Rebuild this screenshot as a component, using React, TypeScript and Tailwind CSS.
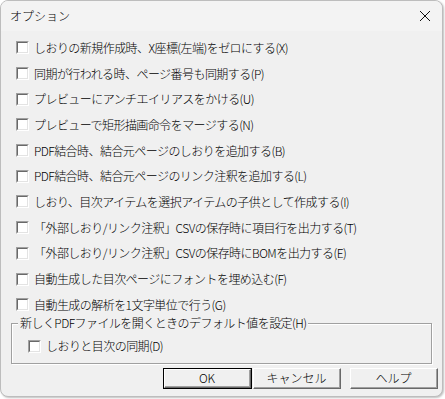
import React, { FC } from "react";

const options: string[] = [
  "しおりの新規作成時、X座標(左端)をゼロにする(X)",
  "同期が行われる時、ページ番号も同期する(P)",
  "プレビューにアンチエイリアスをかける(U)",
  "プレビューで矩形描画命令をマージする(N)",
  "PDF結合時、結合元ページのしおりを追加する(B)",
  "PDF結合時、結合元ページのリンク注釈を追加する(L)",
  "しおり、目次アイテムを選択アイテムの子供として作成する(I)",
  "「外部しおり/リンク注釈」CSVの保存時に項目行を出力する(T)",
  "「外部しおり/リンク注釈」CSVの保存時にBOMを出力する(E)",
  "自動生成した目次ページにフォントを埋め込む(F)",
  "自動生成の解析を1文字単位で行う(G)",
];

// classic sunken 13px checkbox
const Check: FC = () => (
  <span className="block w-[13px] h-[13px] shrink-0 border border-t-[#a0a0a0] border-l-[#a0a0a0] border-b-white border-r-white">
    <span className="block w-full h-full bg-white border border-t-[#696969] border-l-[#696969] border-b-[#e3e3e3] border-r-[#e3e3e3]" />
  </span>
);

const Button: FC<{ label: string; isDefault?: boolean; className?: string }> = ({
  label,
  isDefault,
  className = "",
}) => (
  <div
    className={`h-[21px] ${isDefault ? "border border-black" : ""} ${className}`}
  >
    <div className="h-full border border-t-white border-l-white border-b-[#696969] border-r-[#696969] bg-[#f0f0f0]">
      <div className="h-full flex items-center justify-center border-b border-r border-[#a0a0a0]">
        {label}
      </div>
    </div>
  </div>
);

const App: FC = () => {
  return (
    <div className="w-[445px] h-[399px] bg-white font-['Noto_Sans_CJK_JP',sans-serif] font-light text-[12px] text-black leading-none">
      <div className="w-[443px] h-[397px] rounded-lg border border-[#bdbdbd] bg-[#f0f0f0] overflow-hidden flex flex-col shadow-[1px_1px_2px_rgba(0,0,0,0.25)]">
        {/* title bar */}
        <div className="h-[30px] shrink-0 bg-[#f3f3f3] flex items-center justify-between pl-[9px] pr-[11px]">
          <span className="text-[12px]">オプション</span>
          <svg width="12" height="12" viewBox="0 0 12 12">
            <path d="M1 1 L11 11 M11 1 L1 11" stroke="#111" strokeWidth="1" />
          </svg>
        </div>

        <div className="flex flex-col pt-[4px]">
          {options.map((opt) => (
            <div key={opt} className="h-[25.7px] flex items-center pl-[15px] gap-[5px]">
              <Check />
              <span className="whitespace-nowrap tracking-[-0.55px]">{opt}</span>
            </div>
          ))}
        </div>

        {/* group box */}
        <div className="relative mx-[10px] mt-[5px] h-[41px] border border-[#a0a0a0] shadow-[inset_1px_1px_0_white,1px_1px_0_white]">
          <span className="absolute -top-[7px] left-[6px] px-[2px] bg-[#f0f0f0] whitespace-nowrap tracking-[-0.55px]">
            新しくPDFファイルを開くときのデフォルト値を設定(H)
          </span>
          <div className="flex items-center gap-[5px] pl-[16px] pt-[16px]">
            <Check />
            <span className="tracking-[-0.55px]">しおりと目次の同期(D)</span>
          </div>
        </div>

        <div className="flex mt-[4px] pl-[162px]">
          <Button label="OK" isDefault className="w-[89px]" />
          <Button label="キャンセル" className="w-[88px] ml-[1px]" />
          <Button label="ヘルプ" className="w-[88px] ml-[9px]" />
        </div>
      </div>
    </div>
  );
};

export default App;
